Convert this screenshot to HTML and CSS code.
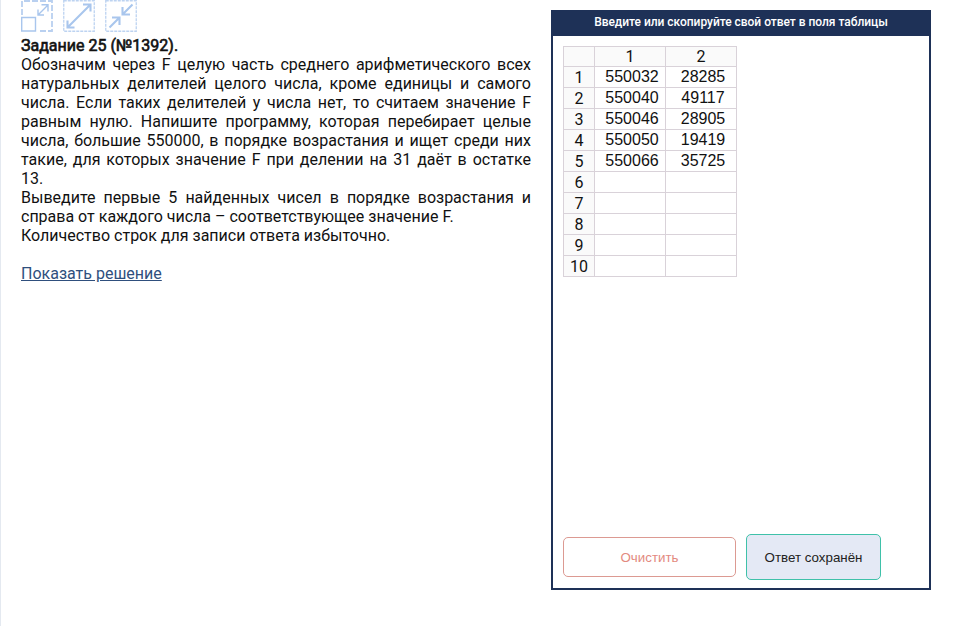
FILE: index.html
```html
<!DOCTYPE html>
<html lang="ru">
<head>
<meta charset="utf-8">
<title>Задание 25</title>
<link rel="stylesheet" href="styles.css">
</head>
<body>
<main class="page">
  <section class="task">
    <div class="tools">
      <svg width="32" height="32" viewBox="0 0 32 32"><path class="dash-wide" d="M1 15V1H31V31H17"/><path class="line" d="M.7 17.500H14.500V31H.7Z"/><path class="line" d="M17 15L27 5M20.500 4.800H27V11.500M17 9.500V15H23"/></svg>
      <svg width="32" height="32" viewBox="0 0 32 32"><path class="dash" d="M.75.75H31.25V31.25H.75Z"/><path class="arrow" d="M5 27L27 5M20 4.500H27.500V11.500M4.500 20.500V27.500H11.500"/></svg>
      <svg width="32" height="32" viewBox="0 0 32 32"><path class="dash" d="M.75.75H31.25V31.25H.75Z"/><path class="arrow" d="M27.500 4.500L18 14M17.500 7V14.500H25M4.500 27.500L14 18M7 17.500H14.500V25"/></svg>
    </div>
    <h1 class="title">Задание 25 (№1392).</h1>
    <p>Обозначим через F целую часть среднего арифметического всех натуральных делителей целого числа, кроме единицы и самого числа. Если таких делителей у числа нет, то считаем значение F равным нулю. Напишите программу, которая перебирает целые числа, большие 550000, в порядке возрастания и ищет среди них такие, для которых значение F при делении на 31 даёт в остатке 13.</p>
    <p>Выведите первые 5 найденных чисел в порядке возрастания и справа от каждого числа – соответствующее значение F.</p>
    <p>Количество строк для записи ответа избыточно.</p>
    <a class="solution" href="#">Показать решение</a>
  </section>
  <section class="answer">
    <header class="answer-head">Введите или скопируйте свой ответ в поля таблицы</header>
    <table class="grid">
      <colgroup><col class="col-num"><col class="col-val"><col class="col-val"></colgroup>
      <tr class="head"><th></th><th>1</th><th>2</th></tr>
      <tr><th>1</th><td>550032</td><td>28285</td></tr>
      <tr><th>2</th><td>550040</td><td>49117</td></tr>
      <tr><th>3</th><td>550046</td><td>28905</td></tr>
      <tr><th>4</th><td>550050</td><td>19419</td></tr>
      <tr><th>5</th><td>550066</td><td>35725</td></tr>
      <tr><th>6</th><td></td><td></td></tr>
      <tr><th>7</th><td></td><td></td></tr>
      <tr><th>8</th><td></td><td></td></tr>
      <tr><th>9</th><td></td><td></td></tr>
      <tr><th>10</th><td></td><td></td></tr>
    </table>
    <div class="actions">
      <button class="btn clear">Очистить</button>
      <button class="btn saved">Ответ сохранён</button>
    </div>
  </section>
</main>
</body>
</html>
```
FILE: styles.css
```css
* { box-sizing: border-box; }
body { margin: 0; background: #fff; color: #111; font: 16px/19px Roboto, sans-serif; }
.page { display: flex; gap: 20px; height: 626px; padding-left: 20px; border-left: 1px solid #e4e9f0; }
.task { width: 510px; }
.tools { display: flex; gap: 10px; height: 36px; }
.tools svg { display: block; fill: none; stroke: #a9c6ed; }
.tools .line { stroke-width: 1.4; }
.tools .arrow { stroke-width: 2.1; }
.tools .dash { stroke: #bdd3f1; stroke-width: 1.3; stroke-dasharray: 3 1; }
.tools .dash-wide { stroke: #b9d0f0; stroke-width: 1.8; stroke-dasharray: 6 2; }
.title { margin: 0; font-size: 16px; line-height: 19px; font-weight: 400; -webkit-text-stroke: .6px; }
.task p { margin: 0; text-align: justify; }
.solution { display: inline-block; margin-top: 19px; color: #2f4f7d; text-decoration: underline; }
.answer { display: flex; flex-direction: column; width: 380px; height: 580px; margin-top: 10px; border: 2px solid #1e3157; }
.answer-head { height: 24px; background: #1e3157; color: #fff; font-size: 12px; line-height: 20px; font-weight: 500; letter-spacing: -.03px; text-align: center; }
.grid { table-layout: fixed; width: 174px; margin: 10px 0 0 10px; border-collapse: separate; border-spacing: 0; border-top: 1px solid #d9d2d9; border-left: 1px solid #d9d2d9; }
.col-num { width: 31px; }
.col-val { width: 71px; }
.grid th, .grid td { height: 21px; padding: 0; border-right: 1px solid #d9d2d9; border-bottom: 1px solid #d9d2d9; font-weight: 400; text-align: center; }
.grid th { padding-top: 1px; background: #fafafa; line-height: 19px; }
.grid td { padding: 0 0 1px 4px; line-height: 19px; font-family: "Liberation Sans", Arial, sans-serif; }
.grid .head th { height: 20px; padding: 0; }
.actions { display: flex; align-items: center; gap: 10px; margin: auto 0 8px 10px; }
.btn { padding: 0; border-radius: 5px; font: 13.333px "Liberation Sans", Arial, sans-serif; }
.clear { width: 173px; height: 40px; border: 1px solid #dc9a92; background: #fff; color: #e38a80; }
.saved { width: 135px; height: 46px; border: 1px solid #3fc1a9; background: #e4e9f5; color: #222; }
```
